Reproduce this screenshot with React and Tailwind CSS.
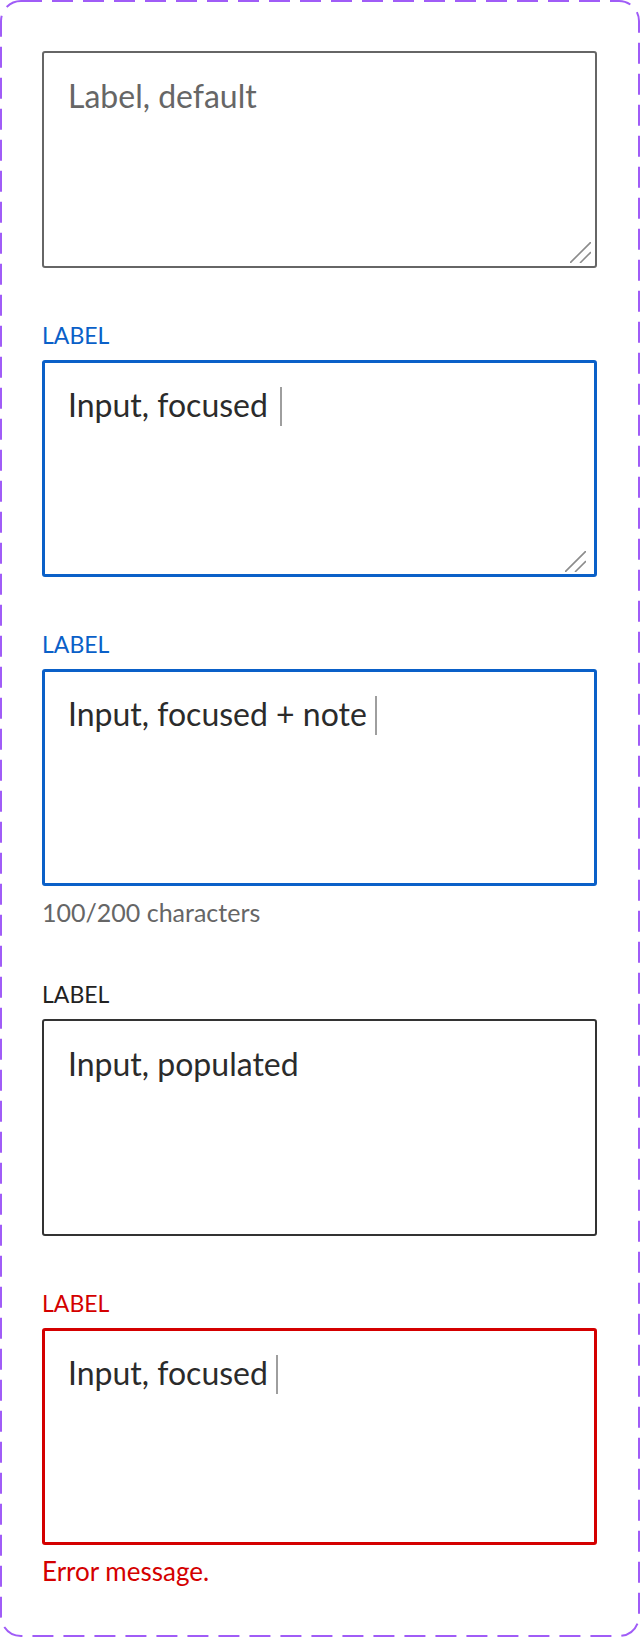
import React from 'react';

const font = { fontFamily: 'Lato, "Noto Sans", sans-serif' };

const ResizeHandle = ({ className }) => (
    <svg className={`absolute ${className}`} width="21" height="21" viewBox="0 0 21 21" fill="none">
        <line x1="0.5" y1="20.5" x2="20.5" y2="0.5" stroke="#8c8c8c" strokeWidth="1.6" strokeLinecap="round" />
        <line x1="10.5" y1="20.5" x2="20.5" y2="10.5" stroke="#8c8c8c" strokeWidth="1.6" strokeLinecap="round" />
    </svg>
);

const Cursor = ({ gap = 'ml-[8px]' }) => (
    <span className={`inline-block w-[2px] h-[39px] bg-[#9e9e9e] ${gap}`}></span>
);

const Field = ({ label, labelColor, border, text, textColor, cursor, cursorGap, handle, handlePos, helper, helperClass, className = '' }) => (
    <div className={className}>
        {label && (
            <div className={`text-[23px] leading-[22px] mb-[14px] ${labelColor}`}>{label}</div>
        )}
        <div className={`relative h-[217px] rounded-[3px] ${border}`}>
            <div className={`flex items-start text-[32px] leading-[36px] ${textColor}`}>
                <span>{text}</span>
                {cursor && <Cursor gap={cursorGap} />}
            </div>
            {handle && <ResizeHandle className={handlePos} />}
        </div>
        {helper && (
            <div className={`mt-[14px] leading-[24px] ${helperClass}`}>{helper}</div>
        )}
    </div>
);

export default function App() {
    return (
        <div className="w-[640px] h-[1637px] bg-white" style={font}>
            <div className="relative w-[640px] h-[1637px] pt-[51px] pl-[42px] pr-[43px]">
                {/* dashed frame */}
                <svg className="absolute inset-0 pointer-events-none" width="640" height="1637" fill="none">
                    <rect x="1" y="1" width="638" height="1635" rx="20" stroke="#a05cf7" strokeWidth="2" strokeDasharray="21 10" />
                </svg>

                <Field
                    border="border-2 border-[#666666] pt-[25px] pl-[24px]"
                    text="Label, default"
                    textColor="text-[#666666]"
                    handle
                    handlePos="right-[4px] bottom-[3px]"
                />

                <Field
                    className="mt-[56px]"
                    label="LABEL"
                    labelColor="text-[#0a60c8]"
                    border="border-[3px] border-[#0a60c8] pt-[24px] pl-[23px]"
                    text="Input, focused"
                    textColor="text-[#2b2b2b]"
                    cursor
                    cursorGap="ml-[12px]"
                    handle
                    handlePos="right-[8px] bottom-[2px]"
                />

                <Field
                    className="mt-[56px]"
                    label="LABEL"
                    labelColor="text-[#0a60c8]"
                    border="border-[3px] border-[#0a60c8] pt-[24px] pl-[23px]"
                    text="Input, focused + note"
                    textColor="text-[#2b2b2b]"
                    cursor
                    helper="100/200 characters"
                    helperClass="text-[25px] text-[#666666]"
                />

                <Field
                    className="mt-[59px]"
                    label="LABEL"
                    labelColor="text-[#222222]"
                    border="border-2 border-[#333333] pt-[25px] pl-[24px]"
                    text="Input, populated"
                    textColor="text-[#2b2b2b]"
                />

                <Field
                    className="mt-[56px]"
                    label="LABEL"
                    labelColor="text-[#d40000]"
                    border="border-[3px] border-[#d40000] pt-[24px] pl-[23px]"
                    text="Input, focused"
                    textColor="text-[#2b2b2b]"
                    cursor
                    helper="Error message."
                    helperClass="text-[26px] text-[#d40000]"
                />
            </div>
        </div>
    );
}
